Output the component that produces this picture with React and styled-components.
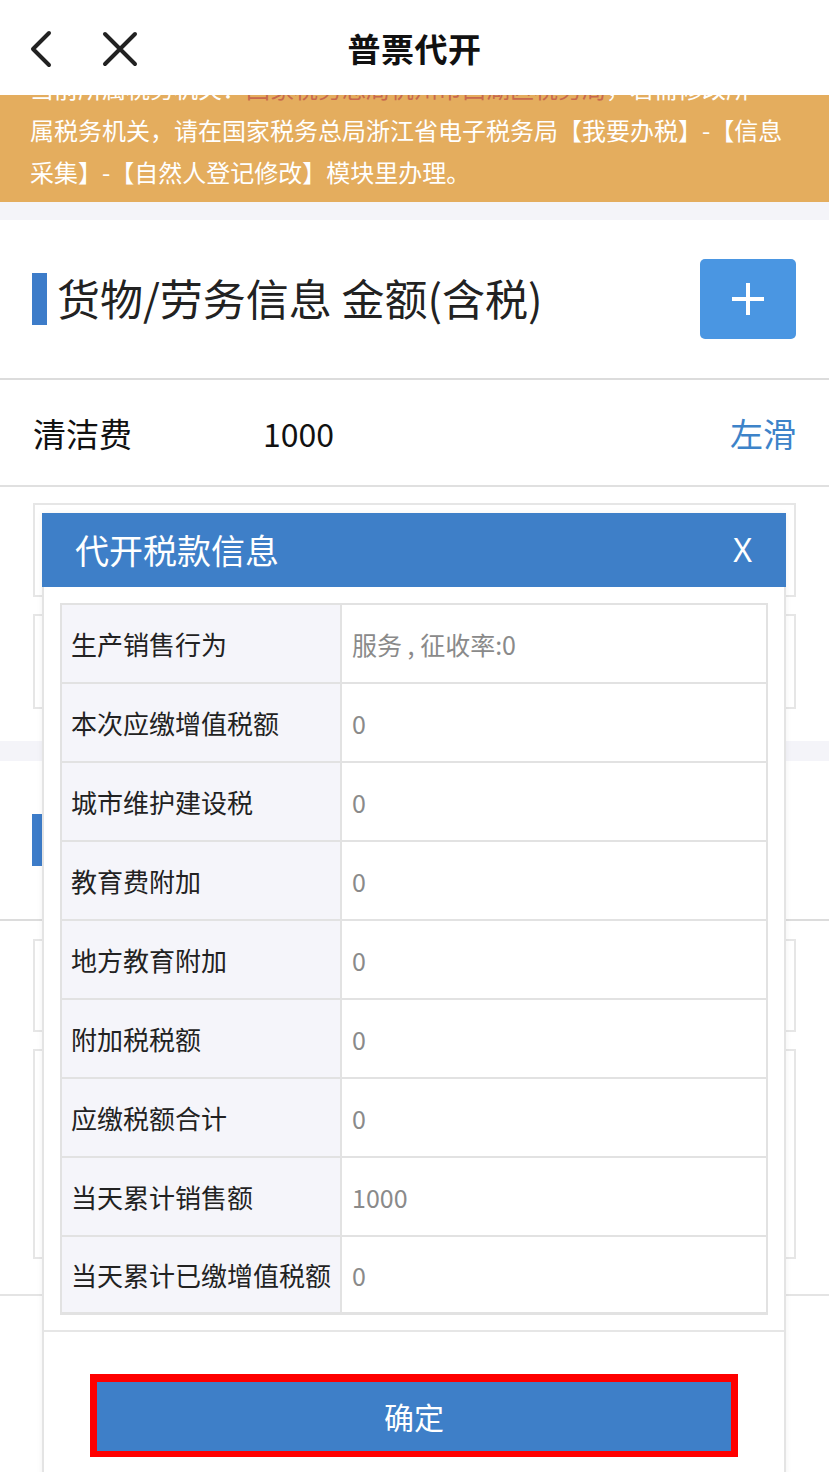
import React from "react";
import styled, { createGlobalStyle } from "styled-components";

const Global = createGlobalStyle`
  html, body { margin: 0; padding: 0; background: #fff; }
  body { font-family: "Noto Sans CJK SC", "Noto Sans", sans-serif; overflow: hidden; }
  * { box-sizing: border-box; }
`;

const Page = styled.div`
  position: relative;
  width: 829px;
  height: 1472px;
  overflow: hidden;
  background: #fff;
  display: flex;
  flex-direction: column;
`;

const NavBar = styled.div`
  position: relative;
  z-index: 2;
  height: 95px;
  flex: none;
  background: #fff;
  display: grid;
  grid-template-columns: 200px 1fr 200px;
  align-items: center;
`;

const NavIcons = styled.div`
  display: flex;
  align-items: center;
  gap: 48px;
  padding-left: 28px;
  padding-top: 2px;
`;

const NavTitle = styled.div`
  text-align: center;
  font-size: 33px;
  font-weight: 700;
  color: #111;
  letter-spacing: 0.5px;
`;

const Banner = styled.div`
  height: 107px;
  flex: none;
  overflow: hidden;
  background: #e4ad5e;
  padding: 0 30px;
`;

const BannerText = styled.div`
  margin-top: -28px;
  font-size: 24px;
  line-height: 42px;
  color: #fff;
`;

const BannerLine = styled.div`
  white-space: nowrap;
`;

const Red = styled.span`
  color: #c8684c;
`;

const Gap = styled.div`
  height: ${(p) => p.$h}px;
  flex: none;
  background: #f4f4f9;
`;

const SectionHeader = styled.div`
  height: 160px;
  flex: none;
  display: flex;
  align-items: center;
  justify-content: space-between;
  padding: 0 33px 0 32px;
  border-bottom: 2px solid #dcdcdc;
`;

const TitleWrap = styled.div`
  display: flex;
  align-items: center;
  gap: 10px;
`;

const TitleBar = styled.div`
  width: 15px;
  height: 52px;
  background: #3d7cc9;
`;

const SectionTitle = styled.div`
  font-size: 43px;
  color: #222;
  line-height: 1;
  padding-bottom: 4px;
`;

const PlusButton = styled.div`
  width: 96px;
  height: 80px;
  border-radius: 5px;
  background: #4a96e2;
  display: flex;
  align-items: center;
  justify-content: center;
`;

const ItemRow = styled.div`
  height: 107px;
  flex: none;
  display: flex;
  align-items: center;
  padding: 0 33px;
  border-bottom: 2px solid #e0e0e0;
  font-size: 33px;
  color: #111;
`;

const ItemName = styled.div`
  width: 230px;
`;

const ItemAmount = styled.div`
  flex: 1;
  font-size: 32px;
`;

const SlideHint = styled.div`
  color: #3d83c9;
`;

const CardList = styled.div`
  flex: none;
  display: flex;
  flex-direction: column;
  gap: 17px;
  padding: ${(p) => p.$pad};
  border-bottom: ${(p) => (p.$line ? "2px solid #e4e4e4" : "none")};
`;

const Card = styled.div`
  height: ${(p) => p.$h}px;
  border: 2px solid #e6e6e6;
  background: #fff;
`;

const Rest = styled.div`
  flex: 1;
`;

/* ---------- modal ---------- */

const Modal = styled.div`
  position: absolute;
  z-index: 5;
  left: 42px;
  top: 513px;
  width: 744px;
  height: 980px;
  background: #fff;
  border-left: 2px solid #e4e4e4;
  border-right: 2px solid #e4e4e4;
  box-shadow: 0 0 6px rgba(0, 0, 0, 0.06);
  display: flex;
  flex-direction: column;
`;

const ModalHeader = styled.div`
  height: 74px;
  margin: 0 -2px;
  background: #3e7fc8;
  display: flex;
  align-items: center;
  justify-content: space-between;
  padding: 0 34px 0 33px;
  color: #fff;
`;

const ModalTitle = styled.div`
  font-size: 34px;
  padding-bottom: 2px;
`;

const CloseX = styled.div`
  font-family: "Noto Sans", sans-serif;
  font-size: 32px;
  padding-bottom: 2px;
`;

const ModalBody = styled.div`
  padding: 16px 16px 15px;
  border-bottom: 2px solid #e6e6e6;
`;

const Table = styled.div`
  border: 2px solid #e2e2e2;
  border-bottom-width: 1px;
`;

const TRow = styled.div`
  display: grid;
  grid-template-columns: 280px 1fr;
  height: 79px;
  border-bottom: 2px solid #e2e2e2;
  &:last-child { height: 77px; }
`;

const TLabel = styled.div`
  background: #f5f5fa;
  border-right: 2px solid #e2e2e2;
  display: flex;
  align-items: center;
  padding-left: 9px;
  font-size: 26px;
  color: #222;
  white-space: nowrap;
`;

const TValue = styled.div`
  display: flex;
  align-items: center;
  padding-left: 10px;
  font-size: 25px;
  color: #8a8a8a;
  white-space: pre;
`;

const Footer = styled.div`
  display: flex;
  justify-content: center;
  padding-top: 42px;
`;

const Highlight = styled.div`
  border: 7px solid #ff0000;
  border-top-width: 8px;
  border-bottom-width: 6px;
`;

const ConfirmButton = styled.div`
  width: 634px;
  height: 69px;
  background: #3e7fc8;
  color: #fff;
  font-size: 30px;
  display: flex;
  align-items: center;
  justify-content: center;
  padding-bottom: 2px;
`;

const rows = [
  ["生产销售行为", "服务 , 征收率:0"],
  ["本次应缴增值税额", "0"],
  ["城市维护建设税", "0"],
  ["教育费附加", "0"],
  ["地方教育附加", "0"],
  ["附加税税额", "0"],
  ["应缴税额合计", "0"],
  ["当天累计销售额", "1000"],
  ["当天累计已缴增值税额", "0"],
];

export default function App() {
  return (
    <>
      <Global />
      <Page>
        <NavBar>
          <NavIcons>
            <svg width="26" height="38" viewBox="0 0 26 38">
              <polyline points="21,3 5,19 21,35" fill="none" stroke="#222" strokeWidth="4" strokeLinecap="round" strokeLinejoin="round" />
            </svg>
            <svg width="36" height="36" viewBox="0 0 36 36">
              <path d="M3 3 L33 33 M33 3 L3 33" fill="none" stroke="#222" strokeWidth="4" strokeLinecap="round" />
            </svg>
          </NavIcons>
          <NavTitle>普票代开</NavTitle>
          <div />
        </NavBar>

        <Banner>
          <BannerText>
            <BannerLine>
              当前所属税务机关：<Red>国家税务总局杭州市西湖区税务局</Red>，若需修改所
            </BannerLine>
            <BannerLine>属税务机关，请在国家税务总局浙江省电子税务局【我要办税】-【信息</BannerLine>
            <BannerLine>采集】-【自然人登记修改】模块里办理。</BannerLine>
          </BannerText>
        </Banner>

        <Gap $h={18} />

        <SectionHeader>
          <TitleWrap>
            <TitleBar />
            <SectionTitle>货物/劳务信息 金额(含税)</SectionTitle>
          </TitleWrap>
          <PlusButton>
            <svg width="34" height="34" viewBox="0 0 34 34">
              <path d="M17 1 V33 M1 17 H33" stroke="#fff" strokeWidth="4" />
            </svg>
          </PlusButton>
        </SectionHeader>

        <ItemRow>
          <ItemName>清洁费</ItemName>
          <ItemAmount>1000</ItemAmount>
          <SlideHint>左滑</SlideHint>
        </ItemRow>

        <CardList $pad="16px 33px 32px">
          <Card $h={94} />
          <Card $h={95} />
        </CardList>

        <Gap $h={20} />

        <SectionHeader>
          <TitleWrap>
            <TitleBar />
          </TitleWrap>
        </SectionHeader>

        <CardList $pad="18px 33px 35px" $line>
          <Card $h={93} />
          <Card $h={210} />
        </CardList>

        <Rest />

        <Modal>
          <ModalHeader>
            <ModalTitle>代开税款信息</ModalTitle>
            <CloseX>X</CloseX>
          </ModalHeader>
          <ModalBody>
            <Table>
              {rows.map(([label, value]) => (
                <TRow key={label}>
                  <TLabel>{label}</TLabel>
                  <TValue>{value}</TValue>
                </TRow>
              ))}
            </Table>
          </ModalBody>
          <Footer>
            <Highlight>
              <ConfirmButton>确定</ConfirmButton>
            </Highlight>
          </Footer>
        </Modal>
      </Page>
    </>
  );
}
